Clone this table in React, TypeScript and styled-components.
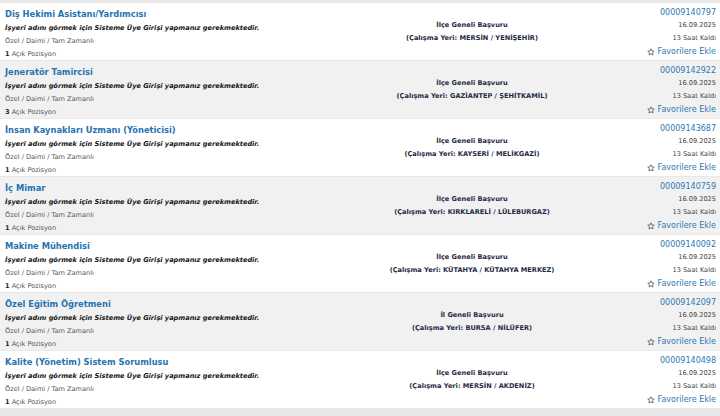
import React from "react";
import styled, { createGlobalStyle } from "styled-components";

const Global = createGlobalStyle`
  html, body { margin: 0; padding: 0; background: #e8e8e8; }
  body { font-family: "DejaVu Sans", Verdana, sans-serif; }
`;

type Job = {
  title: string;
  positions: number;
  scope: string;
  place: string;
  id: string;
};

const jobs: Job[] = [
  { title: "Diş Hekimi Asistanı/Yardımcısı", positions: 1, scope: "İlçe Geneli Başvuru", place: "MERSİN / YENİŞEHİR", id: "00009140797" },
  { title: "Jeneratör Tamircisi", positions: 3, scope: "İlçe Geneli Başvuru", place: "GAZİANTEP / ŞEHİTKAMİL", id: "00009142922" },
  { title: "İnsan Kaynakları Uzmanı (Yöneticisi)", positions: 1, scope: "İlçe Geneli Başvuru", place: "KAYSERİ / MELİKGAZİ", id: "00009143687" },
  { title: "İç Mimar", positions: 1, scope: "İlçe Geneli Başvuru", place: "KIRKLARELİ / LÜLEBURGAZ", id: "00009140759" },
  { title: "Makine Mühendisi", positions: 1, scope: "İlçe Geneli Başvuru", place: "KÜTAHYA / KÜTAHYA MERKEZ", id: "00009140092" },
  { title: "Özel Eğitim Öğretmeni", positions: 1, scope: "İl Geneli Başvuru", place: "BURSA / NİLÜFER", id: "00009142097" },
  { title: "Kalite (Yönetim) Sistem Sorumlusu", positions: 1, scope: "İlçe Geneli Başvuru", place: "MERSİN / AKDENİZ", id: "00009140498" },
];

const List = styled.div`
  display: flex;
  flex-direction: column;
  gap: 1px;
  padding-top: 3px;
  background: #e8e8e8;
  min-height: 416px;
  box-sizing: border-box;
`;

const Row = styled.div<{ $alt: boolean }>`
  display: grid;
  grid-template-columns: 330px 284px 1fr;
  height: 57px;
  background: ${(p) => (p.$alt ? "#f1f1f1" : "#ffffff")};
`;

const Left = styled.div`
  display: flex;
  flex-direction: column;
  padding: 4px 0 0 5px;
`;

const Title = styled.a`
  font-size: 8.3px;
  font-weight: bold;
  line-height: 15px;
  color: #2673b0;
  text-decoration: none;
  white-space: nowrap;
`;

const Notice = styled.div`
  font-size: 6.6px;
  font-weight: bold;
  font-style: italic;
  line-height: 13px;
  color: #151515;
  white-space: nowrap;
`;

const Meta = styled.div`
  font-size: 6.6px;
  line-height: 13px;
  color: #555555;
  white-space: nowrap;
  b { color: #222; }
`;

const Middle = styled.div`
  display: flex;
  flex-direction: column;
  align-items: center;
  padding-top: 16px;
`;

const MidLine = styled.div`
  font-size: 6.6px;
  font-weight: bold;
  line-height: 13px;
  color: #1e2a44;
  white-space: nowrap;
`;

const Right = styled.div`
  display: flex;
  flex-direction: column;
  align-items: flex-end;
  padding: 3px 4px 0 0;
`;

const Code = styled.a`
  font-size: 8px;
  line-height: 13px;
  color: #2f78b3;
  text-decoration: none;
`;

const Small = styled.div`
  font-size: 6.6px;
  line-height: 12.6px;
  color: #444444;
`;

const Fav = styled.a`
  display: flex;
  align-items: center;
  gap: 3px;
  font-size: 8px;
  line-height: 13px;
  margin-top: 1px;
  color: #2f78b3;
  text-decoration: none;
  white-space: nowrap;
`;

const Star = () => (
  <svg width="8" height="8" viewBox="0 0 24 24" fill="none" stroke="#555" strokeWidth="2.4" strokeLinejoin="round">
    <path d="M12 2.5l2.9 6.3 6.8.7-5.1 4.6 1.5 6.8L12 17.4l-6.1 3.5 1.5-6.8-5.1-4.6 6.8-.7z" />
  </svg>
);

export default function App() {
  return (
    <>
      <Global />
      <List>
        {jobs.map((j, i) => (
          <Row key={j.id} $alt={i % 2 === 1}>
            <Left>
              <Title href="#">{j.title}</Title>
              <Notice>İşyeri adını görmek için Sisteme Üye Girişi yapmanız gerekmektedir.</Notice>
              <Meta>Özel / Daimi / Tam Zamanlı</Meta>
              <Meta>
                <b>{j.positions}</b> Açık Pozisyon
              </Meta>
            </Left>
            <Middle>
              <MidLine>{j.scope}</MidLine>
              <MidLine>(Çalışma Yeri: {j.place})</MidLine>
            </Middle>
            <Right>
              <Code href="#">{j.id}</Code>
              <Small>16.09.2025</Small>
              <Small>13 Saat Kaldı</Small>
              <Fav href="#">
                <Star />
                Favorilere Ekle
              </Fav>
            </Right>
          </Row>
        ))}
      </List>
    </>
  );
}
